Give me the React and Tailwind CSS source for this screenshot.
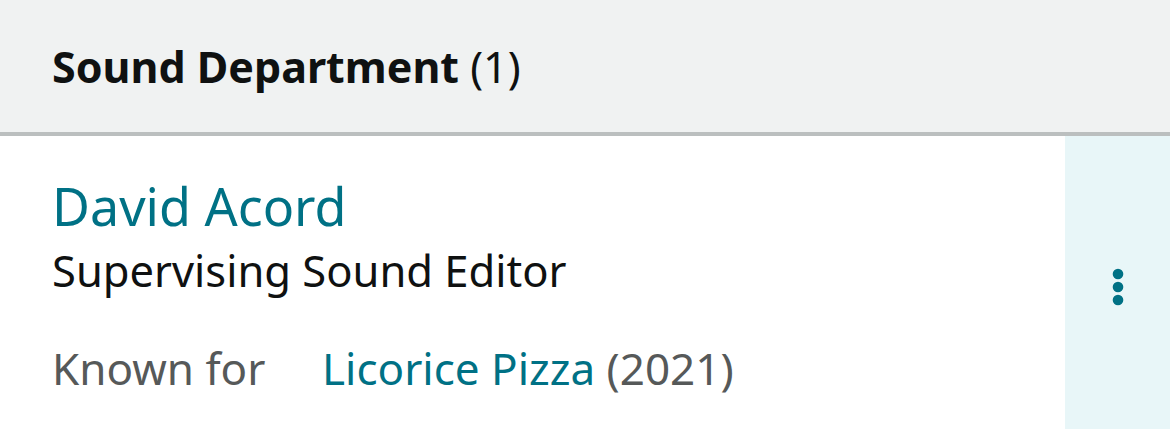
export default function App() {
  return (
    <div className="w-[1170px] h-[429px] overflow-hidden bg-white font-['Noto_Sans',sans-serif]">
      <div className="h-[136px] bg-[#f0f2f2] border-b-4 border-[#bbbfbf] flex items-center pl-[52px]">
        <h2 className="text-[43px] leading-none text-[#0f1111]">
          <span className="font-bold">Sound Department</span> <span>(1)</span>
        </h2>
      </div>
      <div className="flex h-[293px]">
        <div className="flex-1 pl-[52px] pt-[40px]">
          <div className="text-[52px] leading-[60px] text-[#007185]">David Acord</div>
          <div className="mt-[8px] text-[43.5px] leading-[52px] text-[#0f1111]">Supervising Sound Editor</div>
          <div className="mt-[46px] flex text-[44px] leading-[52px] text-[#565959]">
            <span className="w-[270px]">Known for</span>
            <span>
              <span className="text-[#007185]">Licorice Pizza</span> (2021)
            </span>
          </div>
        </div>
        <div className="w-[105px] bg-[#e8f6f8] flex items-center justify-center">
          <svg width="12" height="38" viewBox="0 0 12 38" className="mt-[9px]">
            <circle cx="6" cy="6" r="5.3" fill="#007185" />
            <circle cx="6" cy="19" r="5.3" fill="#007185" />
            <circle cx="6" cy="32" r="5.3" fill="#007185" />
          </svg>
        </div>
      </div>
    </div>
  );
}
